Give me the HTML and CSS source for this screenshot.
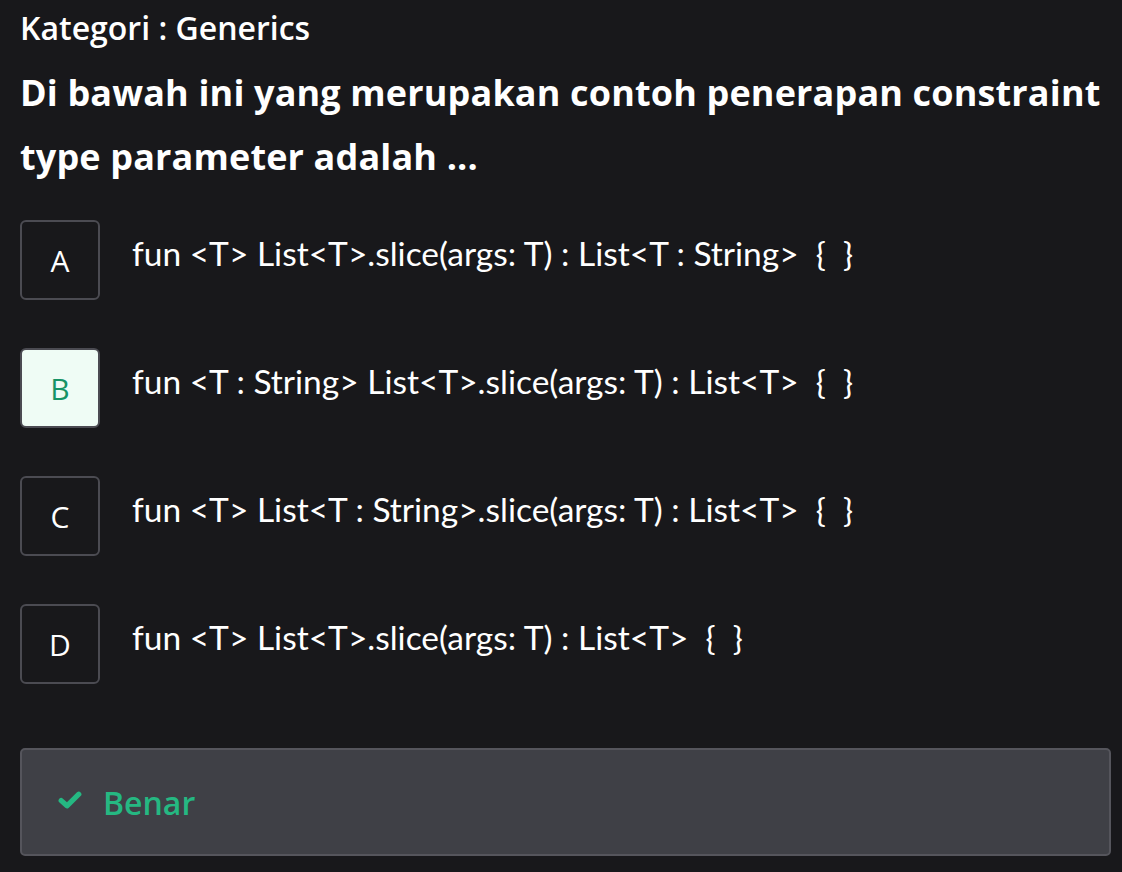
FILE: index.html
```html
<!DOCTYPE html>
<html lang="id">
<head>
<meta charset="utf-8">
<link rel="stylesheet" href="styles.css">
</head>
<body>
<main class="quiz">
  <div class="category">Kategori : Generics</div>
  <h1 class="question">Di bawah ini yang merupakan contoh penerapan constraint type parameter adalah ...</h1>
  <ul class="options">
    <li class="option"><span class="key">A</span><span class="text">fun &lt;T&gt; List&lt;T&gt;.slice(args: T) : List&lt;T : String&gt;&nbsp; {&nbsp; }</span></li>
    <li class="option selected"><span class="key">B</span><span class="text">fun &lt;T : String&gt; List&lt;T&gt;.slice(args: T) : List&lt;T&gt;&nbsp; {&nbsp; }</span></li>
    <li class="option"><span class="key">C</span><span class="text">fun &lt;T&gt; List&lt;T : String&gt;.slice(args: T) : List&lt;T&gt;&nbsp; {&nbsp; }</span></li>
    <li class="option"><span class="key">D</span><span class="text">fun &lt;T&gt; List&lt;T&gt;.slice(args: T) : List&lt;T&gt;&nbsp; {&nbsp; }</span></li>
  </ul>
  <div class="result">
    <svg class="check" viewBox="0 0 24 18" width="24" height="18" aria-hidden="true"><path d="M3.2 9.6 L9 14.8 L20.8 3.2" fill="none" stroke="currentColor" stroke-width="5.2" stroke-linecap="round" stroke-linejoin="round"/></svg>
    <span class="result-text">Benar</span>
  </div>
</main>
</body>
</html>
```
FILE: styles.css
```css
html, body {
  margin: 0;
  padding: 0;
  background: #18181b;
}
body {
  font-family: "Open Sans", "Noto Sans", sans-serif;
  color: #ffffff;
}
.quiz {
  padding: 6px 11px 0 20px;
}
.category {
  font-size: 32px;
  font-weight: 600;
  line-height: 44px;
}
.question {
  margin: 11px 0 0 0;
  font-size: 36px;
  font-weight: 700;
  line-height: 64px;
  letter-spacing: 0.15px;
}
.options {
  list-style: none;
  margin: 31px 0 0 0;
  padding: 0;
  display: flex;
  flex-direction: column;
  gap: 48px;
}
.option {
  display: flex;
  align-items: flex-start;
  gap: 32px;
}
.key {
  box-sizing: border-box;
  width: 80px;
  height: 80px;
  flex: none;
  border: 2px solid #4b4b52;
  border-radius: 6px;
  display: flex;
  align-items: center;
  justify-content: center;
  font-size: 30px;
  font-weight: 400;
}
.selected .key {
  background: #effcf5;
  color: #179366;
}
.text {
  font-family: "Lato", sans-serif;
  font-size: 33.5px;
  line-height: 44px;
  padding-top: 11px;
}
.result {
  margin-top: 64px;
  box-sizing: border-box;
  height: 108px;
  background: #3f4046;
  border: 2px solid #55555c;
  border-radius: 5px;
  display: flex;
  align-items: center;
  padding-left: 36px;
  gap: 21px;
  color: #25b882;
}
.check {
  display: block;
  margin-top: -4px;
}
.result-text {
  font-size: 32px;
  font-weight: 600;
}
```
